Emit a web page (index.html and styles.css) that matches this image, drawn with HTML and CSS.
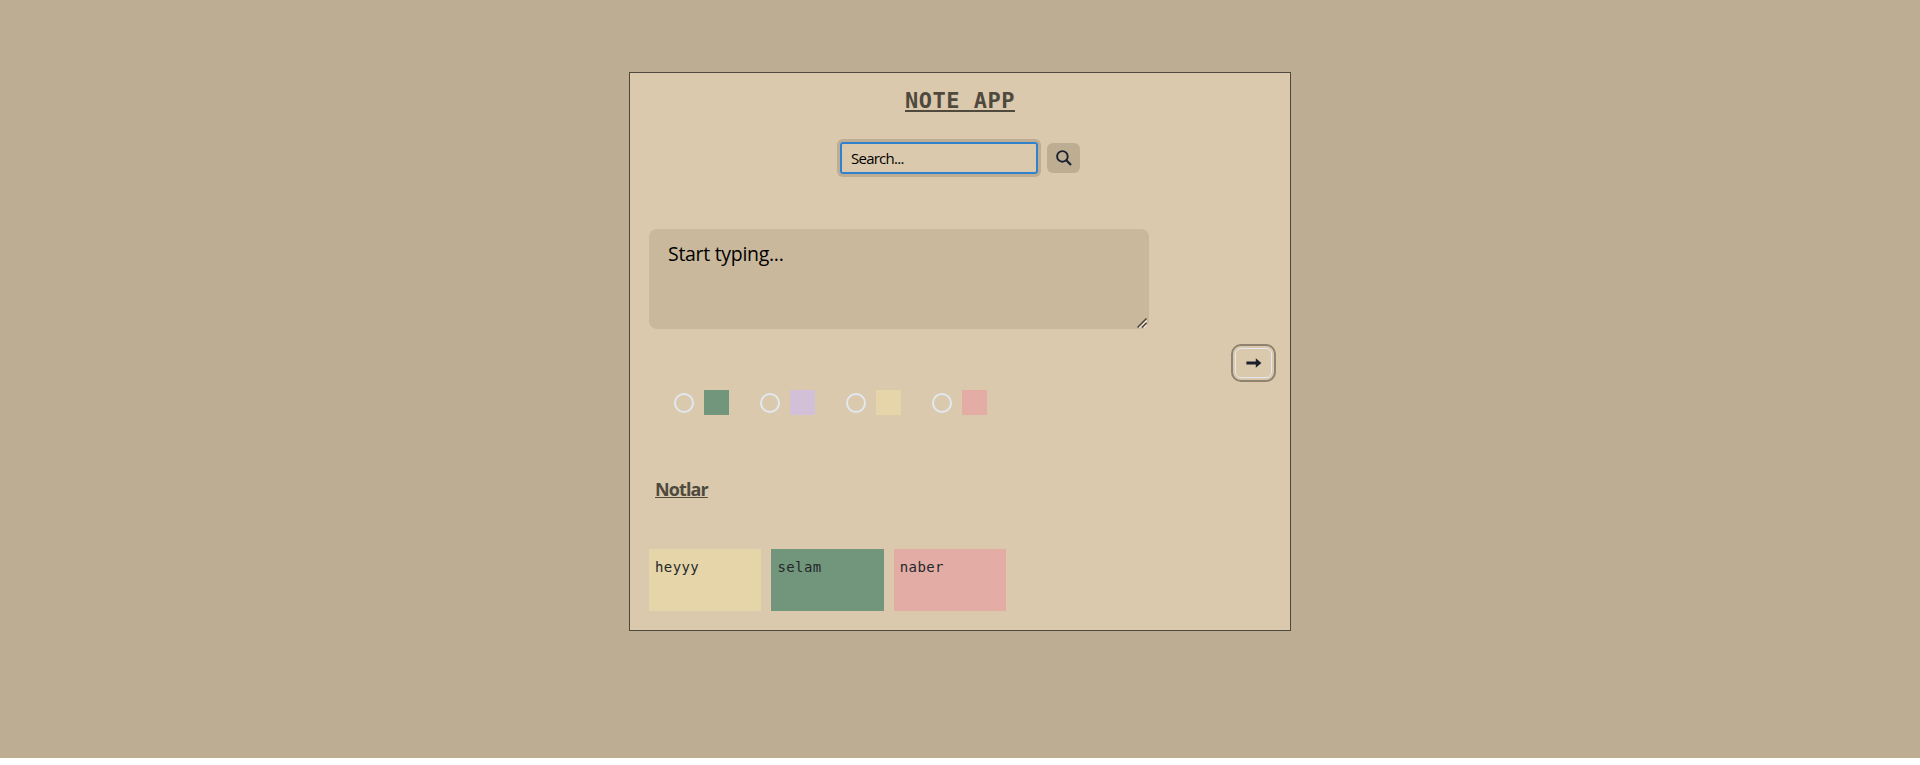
FILE: index.html
```html
<!DOCTYPE html>
<html lang="tr">
<head>
<meta charset="utf-8">
<title>Note App</title>
<link rel="stylesheet" href="styles.css">
</head>
<body>
<div class="app">
  <main class="card">
    <h1 class="title">NOTE APP</h1>
    <form class="search">
      <input class="search-input" type="text" placeholder="Search...">
      <button class="search-button" type="button" aria-label="Search">
        <svg width="16" height="16" viewBox="0 0 16 16" fill="none" stroke="currentColor"><circle cx="6.400" cy="6.400" r="5.300" stroke-width="1.900"/><path d="M10.300 10.300l4.700 4.700" stroke-width="2.200"/></svg>
      </button>
    </form>
    <div class="editor-wrap">
      <textarea class="editor" placeholder="Start typing..."></textarea>
      <svg class="grip" width="10" height="10" viewBox="0 0 10 10" fill="none"><path d="M2.200 9.700l7.500-7.500M6.700 9.700l3-3" stroke="#f2ece0" stroke-width="1.500"/><path d="M.5 9.500l9-9M5 9.500L9.500 5" stroke="#4a4238" stroke-width="1.500"/></svg>
    </div>
    <div class="actions">
      <button class="add-button" type="button" aria-label="Add">
        <svg width="16" height="16" viewBox="0 0 16 16"><path fill="currentColor" d="M.4 6.500h9.400V3.200L15.400 8l-5.600 4.800V9.500H.4z"/></svg>
      </button>
    </div>
    <div class="colors">
      <label class="color"><span class="radio"></span><span class="swatch green"></span></label>
      <label class="color"><span class="radio"></span><span class="swatch purple"></span></label>
      <label class="color"><span class="radio"></span><span class="swatch yellow"></span></label>
      <label class="color"><span class="radio"></span><span class="swatch pink"></span></label>
    </div>
    <h2 class="subtitle">Notlar</h2>
    <div class="notes">
      <div class="note yellow">heyyy</div>
      <div class="note green">selam</div>
      <div class="note pink">naber</div>
    </div>
  </main>
</div>
</body>
</html>
```
FILE: styles.css
```css
* { box-sizing: border-box; }
body { margin: 0; background: #fff; font-family: "Open Sans", "Noto Sans", sans-serif; overflow: hidden; }
.app { height: 758px; padding-top: 72px; background: #bdad93; }
.card { width: 662px; height: 559px; margin: 0 auto; padding: 0 19px; border: 1px solid #4f493e; background: #dac9ad; display: flex; flex-direction: column; }
.title { margin: 13px 0 0; text-align: center; font: bold 22px/30px "DejaVu Sans Mono", monospace; letter-spacing: 0.5px; color: #4f493e; text-decoration: underline; text-decoration-thickness: 2px; text-underline-offset: 2px; }
.search { display: flex; align-items: center; justify-content: center; gap: 9px; margin-top: 26px; }
.search-input { width: 198px; height: 32px; padding: 0 9px; border: 2px solid #3182ce; border-radius: 3px; background: transparent; box-shadow: 0 0 0 3px #bdad93; font: 15px "Open Sans", sans-serif; letter-spacing: -0.75px; }
.search-input::placeholder, .editor::placeholder { color: #000; opacity: 1; }
.search-button { width: 33px; height: 30px; padding: 0; border: 0; border-radius: 6px; background: #bdad93; color: #1a202c; display: flex; align-items: center; justify-content: center; }
.editor-wrap { position: relative; width: 500px; height: 100px; margin-top: 55px; flex: none; }
.editor { display: block; width: 500px; height: 100px; padding: 11px 19px; border: 0; border-radius: 8px; background: #cab89d; font: 19.5px/28px "Open Sans", sans-serif; letter-spacing: -0.3px; resize: none; }
.grip { position: absolute; right: 2px; bottom: 1px; }
.actions { display: flex; justify-content: flex-end; margin-top: 19px; }
.add-button { width: 37px; height: 30px; margin-right: -1px; padding: 0; border: 1px solid #e2e8f0; border-radius: 6px; outline: 2px solid #8f826e; outline-offset: 2px; background: transparent; color: #1a202c; display: flex; align-items: center; justify-content: center; }
.colors { display: flex; gap: 31px; margin-top: 12px; padding-left: 25px; }
.color { display: flex; align-items: center; gap: 10px; }
.radio { width: 20px; height: 20px; margin-top: 1px; border: 2px solid #e2e8f0; border-radius: 50%; }
.swatch { width: 25px; height: 25px; }
.green { background: #72967c; }
.purple { background: #d1c0d8; }
.yellow { background: #e5d5a8; }
.pink { background: #e3aca4; }
.subtitle { margin: 61px 0 0 6px; font-size: 18px; line-height: 27px; font-weight: 700; letter-spacing: -0.9px; color: #4f493e; text-decoration: underline; text-decoration-thickness: 1px; text-underline-offset: 1px; }
.notes { display: flex; gap: 10px; margin-top: 46px; }
.note { width: 112.4px; height: 62px; padding: 6px; font: 14px/25px "DejaVu Sans Mono", monospace; letter-spacing: 0.4px; color: #24282b; }
```
